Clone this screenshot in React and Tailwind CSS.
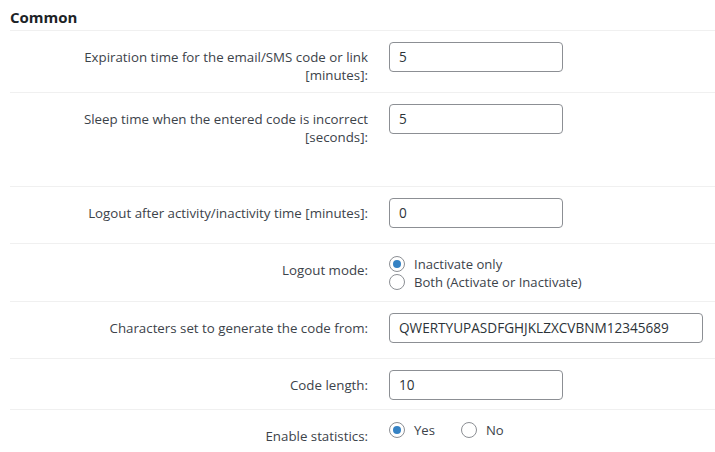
import React from "react";

const font = { fontFamily: '"Open Sans", "Noto Sans", sans-serif' };

function Row({ h, label, children, last }) {
  return (
    <div
      className={`flex ${last ? "" : "border-b border-[#f0f0f0]"}`}
      style={{ height: h }}
    >
      <div className="w-[358px] shrink-0 text-right pt-[17px] text-[13.3px] leading-[18px] text-[#3c434a]">
        {label}
      </div>
      <div className="pl-[21px] pt-[11px]">{children}</div>
    </div>
  );
}

function Input({ value, wide }) {
  return (
    <div
      className={`${wide ? "w-[314px]" : "w-[174px]"} h-[30px] border border-[#8c8f94] rounded-[4px] bg-white flex items-center pl-[9px] text-[13.6px] text-[#2c3338]`}
    >
      {value}
    </div>
  );
}

function Radio({ checked, label }) {
  return (
    <div className="flex items-center h-[18px]">
      <span className="w-[16px] h-[16px] rounded-full border border-[#8c8f94] bg-white flex items-center justify-center shrink-0">
        {checked && <span className="w-[8px] h-[8px] rounded-full bg-[#3582c4]" />}
      </span>
      <span className="ml-[9px] text-[13.1px] text-[#3c434a] leading-[18px]">{label}</span>
    </div>
  );
}

export default function App() {
  return (
    <div className="w-[715px] h-[452px] bg-white overflow-hidden" style={font}>
      <div className="pl-[10px]">
        <div className="h-[31px] border-b border-[#f0f0f0] flex items-center">
          <span className="text-[15px] font-bold text-[#1d2327] leading-none pt-[5px]">Common</span>
        </div>
        <Row h={62} label={<>Expiration time for the email/SMS code or link<br />[minutes]:</>}>
          <Input value="5" />
        </Row>
        <Row h={94} label={<>Sleep time when the entered code is incorrect<br />[seconds]:</>}>
          <Input value="5" />
        </Row>
        <Row h={57} label="Logout after activity/inactivity time [minutes]:">
          <Input value="0" />
        </Row>
        <Row h={58} label="Logout mode:">
          <div className="flex flex-col">
            <Radio checked label="Inactivate only" />
            <Radio label="Both (Activate or Inactivate)" />
          </div>
        </Row>
        <Row h={57} label="Characters set to generate the code from:">
          <Input value="QWERTYUPASDFGHJKLZXCVBNM12345689" wide />
        </Row>
        <Row h={51} label="Code length:">
          <Input value="10" />
        </Row>
        <Row h={42} last label="Enable statistics:">
          <div className="flex items-center gap-[26px]">
            <Radio checked label="Yes" />
            <Radio label="No" />
          </div>
        </Row>
      </div>
    </div>
  );
}
